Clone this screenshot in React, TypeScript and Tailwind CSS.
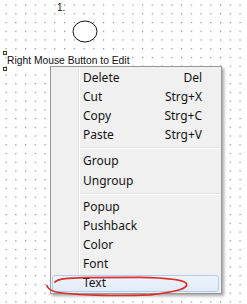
import React from "react";

type Item = { label: string; shortcut?: string; highlight?: boolean } | "sep";

const items: Item[] = [
  { label: "Delete", shortcut: "Del" },
  { label: "Cut", shortcut: "Strg+X" },
  { label: "Copy", shortcut: "Strg+C" },
  { label: "Paste", shortcut: "Strg+V" },
  "sep",
  { label: "Group" },
  { label: "Ungroup" },
  "sep",
  { label: "Popup" },
  { label: "Pushback" },
  { label: "Color" },
  { label: "Font" },
  { label: "Text", highlight: true },
];

export default function App() {
  return (
    <div className="relative w-[247px] h-[304px] overflow-hidden bg-white">
      {/* canvas background: dot grid + circle */}
      <svg className="absolute inset-0" width="247" height="304">
        <defs>
          <pattern id="dots" x="5.5" y="4.5" width="9.75" height="8.73" patternUnits="userSpaceOnUse">
            <rect x="0" y="0" width="1.2" height="1.2" fill="#858585" />
          </pattern>
        </defs>
        <rect x="0" y="0" width="247" height="304" fill="url(#dots)" />
        <ellipse cx="85" cy="31.5" rx="12" ry="10.5" fill="white" stroke="#111" strokeWidth="1" />
      </svg>

      {/* free canvas items */}
      <div className="absolute left-[57px] top-[3px] text-[10px] leading-[10px] text-[#111] [font-family:'Liberation_Sans',Arial,sans-serif]">
        1.
      </div>
      <div className="absolute left-[3px] top-[51px] w-[4px] h-[4px] border border-[#3a3a20] bg-[#f4f0c0]" />
      <div className="absolute left-[3px] top-[67px] w-[4px] h-[4px] border border-[#3a3a20] bg-[#f4f0c0]" />
      <div className="absolute left-[7px] top-[55px] text-[10.3px] leading-[12px] text-[#111] bg-white [font-family:'Liberation_Sans',Arial,sans-serif] whitespace-nowrap">
        Right Mouse Button to Edit
      </div>

      {/* context menu */}
      <div className="absolute left-[50px] top-[66px] w-[172px] border border-[#979797] bg-[#f0f0f0] shadow-[2px_2px_3px_rgba(0,0,0,0.35)] pt-[1px] [font-family:'Noto_Sans','Open_Sans',sans-serif]">
        <div className="relative">
          <div className="absolute top-0 bottom-0 left-[27px] w-[1px] bg-[#e2e3e3]" />
          <div className="absolute top-0 bottom-0 left-[28px] w-[1px] bg-white" />
          {items.map((it, i) =>
            it === "sep" ? (
              <div key={i} className="relative h-[7px] flex flex-col justify-center pl-[29px] pr-[1px]">
                <div className="h-[1px] bg-[#e0e0e0]" />
                <div className="h-[1px] bg-white" />
              </div>
            ) : (
              <div key={i} className="relative h-[19.2px] flex items-center">
                {it.highlight && (
                  <div className="absolute left-[1px] right-[2px] top-[1.5px] bottom-[1px] rounded-[3px] border border-[#b0cdef] bg-[linear-gradient(#eef4fc,#e2ebf8)]" />
                )}
                <span className="relative ml-[32px] text-[12px] text-[#141414] leading-none">{it.label}</span>
                {it.shortcut && (
                  <span className="relative ml-auto mr-[19px] text-[12px] text-[#141414] leading-none">{it.shortcut}</span>
                )}
              </div>
            )
          )}
        </div>
      </div>

      {/* red hand-drawn annotation */}
      <svg className="absolute inset-0 pointer-events-none" width="247" height="304">
        <path
          d="M55 282 C59 278.5 68 278 85 277.6 L140 277.4 C165 277.8 183 279.5 186.5 283.5 C188.5 288.5 176 292 150 294.8 C120 296.2 82 295.3 62 293 C53 291.8 47.5 289 47 285.5"
          fill="none"
          stroke="#d9302c"
          strokeWidth="1.7"
          strokeLinecap="round"
        />
      </svg>
    </div>
  );
}
